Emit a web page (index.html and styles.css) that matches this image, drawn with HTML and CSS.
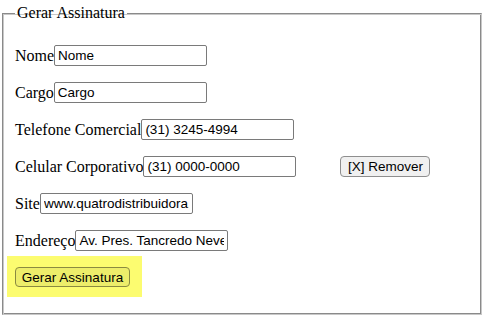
FILE: index.html
```html
<!DOCTYPE html>
<html>
<head>
<meta charset="utf-8">
<link rel="stylesheet" href="styles.css">
</head>
<body>
<fieldset class="box">
  <legend class="box-title">Gerar Assinatura</legend>
  <p class="row"><label>Nome</label><input class="field" type="text" value="Nome"></p>
  <p class="row"><label>Cargo</label><input class="field" type="text" value="Cargo"></p>
  <p class="row"><label>Telefone Comercial</label><input class="field" type="text" value="(31) 3245-4994"></p>
  <p class="row"><label>Celular Corporativo</label><input class="field" type="text" value="(31) 0000-0000"><button class="btn btn-remove" type="button">[X] Remover</button></p>
  <p class="row"><label>Site</label><input class="field" type="text" value="www.quatrodistribuidora.com.br"></p>
  <p class="row"><label>Endereço</label><input class="field" type="text" value="Av. Pres. Tancredo Neves"></p>
  <div class="highlight"><button class="btn btn-submit" type="button">Gerar Assinatura</button></div>
</fieldset>
</body>
</html>
```

FILE: styles.css
```css
html, body {
  margin: 0;
  padding: 0;
  background: #fff;
}
body {
  font-family: "Liberation Serif", "Times New Roman", serif;
  font-size: 16px;
  color: #000;
}
.box {
  margin: 4px 2px 0;
  padding: 0 12px 16px;
  height: 311px;
  box-sizing: border-box;
  border-style: solid;
  border-width: 1px;
  border-color: #8a8a8a #c8c8c8 #c8c8c8 #8a8a8a;
  box-shadow: inset 1px 1px 0 #c8c8c8, inset -1px -1px 0 #8a8a8a;
}
.box-title {
  padding: 0 2px;
  font-size: 16px;
  line-height: 18px;
}
.row {
  margin: 16px 0;
  line-height: 21px;
  height: 21px;
  display: flex;
  align-items: center;
  white-space: nowrap;
}
.row:first-of-type {
  margin-top: 23px;
}
.field {
  box-sizing: border-box;
  width: 153px;
  height: 21px;
  margin: 0;
  padding: 1px 3px;
  border: 1px solid #7a7a7a;
  border-radius: 2px;
  font-family: "Liberation Sans", Arial, sans-serif;
  font-size: 13.5px;
  color: #000;
  background: #fff;
}
.btn {
  box-sizing: border-box;
  height: 21px;
  margin: 0;
  padding: 0;
  border: 1px solid #8e8e8e;
  border-radius: 4px;
  background: #f0f0f0;
  font-family: "Liberation Sans", Arial, sans-serif;
  font-size: 13.5px;
  color: #000;
  white-space: nowrap;
  text-align: center;
}
.btn-remove {
  margin-left: 44px;
  width: 90px;
}
.highlight {
  display: inline-block;
  margin: -11px 0 0 -8px;
  padding: 11px 12px 10px 8px;
  background: #fcfc70;
}
.btn-submit {
  display: block;
  width: 115px;
  height: 20px;
  background: #eded6a;
  border-color: #8a8a40;
}
```
